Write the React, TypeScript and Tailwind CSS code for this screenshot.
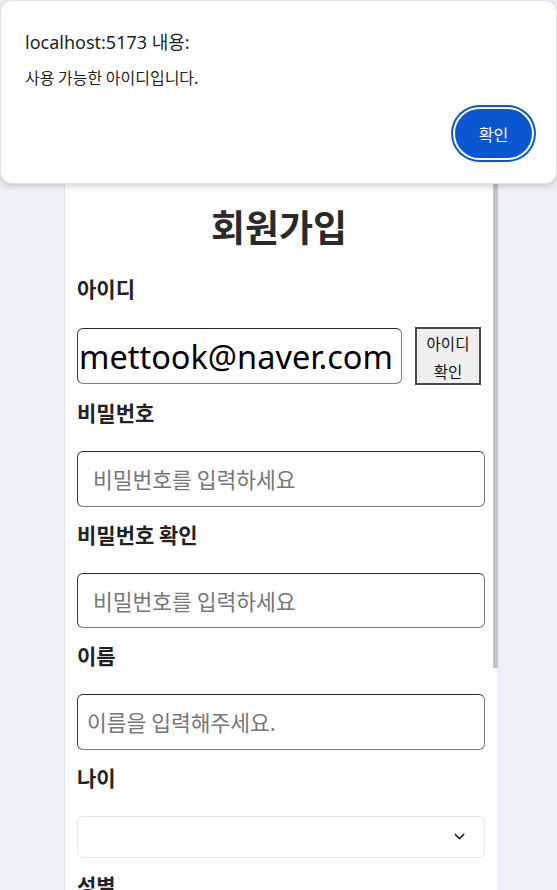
import { ChevronDown } from 'lucide-react'

const labelCls = "block text-[21px] leading-6 font-bold text-[#222] mb-[27px]"
const inputCls =
  "w-[408px] h-[55.5px] rounded-[6px] border border-t-[#2a2a2a] border-l-[#3a3a3a] border-r-[#7a7a7a] border-b-[#7a7a7a] text-[21.5px] text-[#222] placeholder:text-[#767676] outline-none bg-white"

export default function App() {
  const fields = [
    { label: '비밀번호', placeholder: '비밀번호를 입력하세요', pad: 'pl-[15px]' },
    { label: '비밀번호 확인', placeholder: '비밀번호를 입력하세요', pad: 'pl-[15px]' },
    { label: '이름', placeholder: '이름을 입력해주세요.', pad: 'pl-[9px]' },
  ]

  return (
    <div className="relative h-[890px] w-full overflow-hidden bg-[#edf0f8] font-['Noto_Sans','Noto_Sans_CJK_KR',sans-serif]">
      {/* signup card, scrolled */}
      <div className="ml-[64px] flex h-full w-[433px] border-l border-[#e2e5ec] bg-white">
        <div className="w-[428px] px-[12px] pt-[205px] font-['Noto_Sans_CJK_KR',sans-serif]">
          <h1 className="mb-[29px] text-center text-[37px] font-bold leading-[42px] text-[#2a2a2a]">회원가입</h1>

          <label className={labelCls}>아이디</label>
          <div className="flex h-[58px] items-center gap-[13px]">
            <input
              readOnly
              defaultValue="mettook@naver.com"
              className="h-[56px] w-[325px] rounded-[6px] border border-t-[#2a2a2a] border-l-[#3a3a3a] border-r-[#7a7a7a] border-b-[#7a7a7a] pl-[1px] font-['Noto_Sans',sans-serif] text-[32.5px] text-black outline-none"
            />
            <button className="h-[58px] w-[71px] border-2 border-[#4a4a4a] bg-[#efefef] text-[15.5px] leading-[28px] text-[#111]">
              아이디
              <br />
              확인
            </button>
          </div>

          {fields.map((f) => (
            <div key={f.label} className="mt-[15px]">
              <label className={labelCls}>{f.label}</label>
              <input className={`${inputCls} ${f.pad}`} placeholder={f.placeholder} />
            </div>
          ))}

          <div className="mt-[15px]">
            <label className={labelCls}>나이</label>
            <div className="flex h-[42px] w-[408px] items-center justify-end rounded-[6px] border border-[#e5e7eb] pr-[16px]">
              <ChevronDown size={17} strokeWidth={2} className="text-[#222]" />
            </div>
          </div>

          <div className="mt-[15px]">
            <label className={labelCls}>성별</label>
          </div>
        </div>
        <div className="w-[5px]">
          <div className="h-[668px] w-[5px] bg-[#c4c4c4]" />
        </div>
      </div>

      {/* browser alert */}
      <div className="absolute left-0 top-0 h-[184px] w-[557px] rounded-[12px] border border-[#e4e4e4] bg-white shadow-[0_2px_6px_rgba(0,0,0,0.18)]">
        <div className="px-[24px] pt-[28px]">
          <p className="text-[18px] leading-[26px] text-[#1f1f1f]">localhost:5173 내용:</p>
          <p className="mt-[10px] text-[16px] leading-[24px] text-[#1f1f1f] font-['Noto_Sans_CJK_KR',sans-serif]">
            사용 가능한 아이디입니다.
          </p>
        </div>
        <div className="mt-[20px] flex justify-end pr-[24px]">
          <button className="h-[49px] w-[77px] rounded-full bg-[#0b57d0] text-[16px] text-white ring-2 ring-[#0b57d0] ring-offset-2 ring-offset-white font-['Noto_Sans_CJK_KR',sans-serif]">
            확인
          </button>
        </div>
      </div>
    </div>
  )
}
